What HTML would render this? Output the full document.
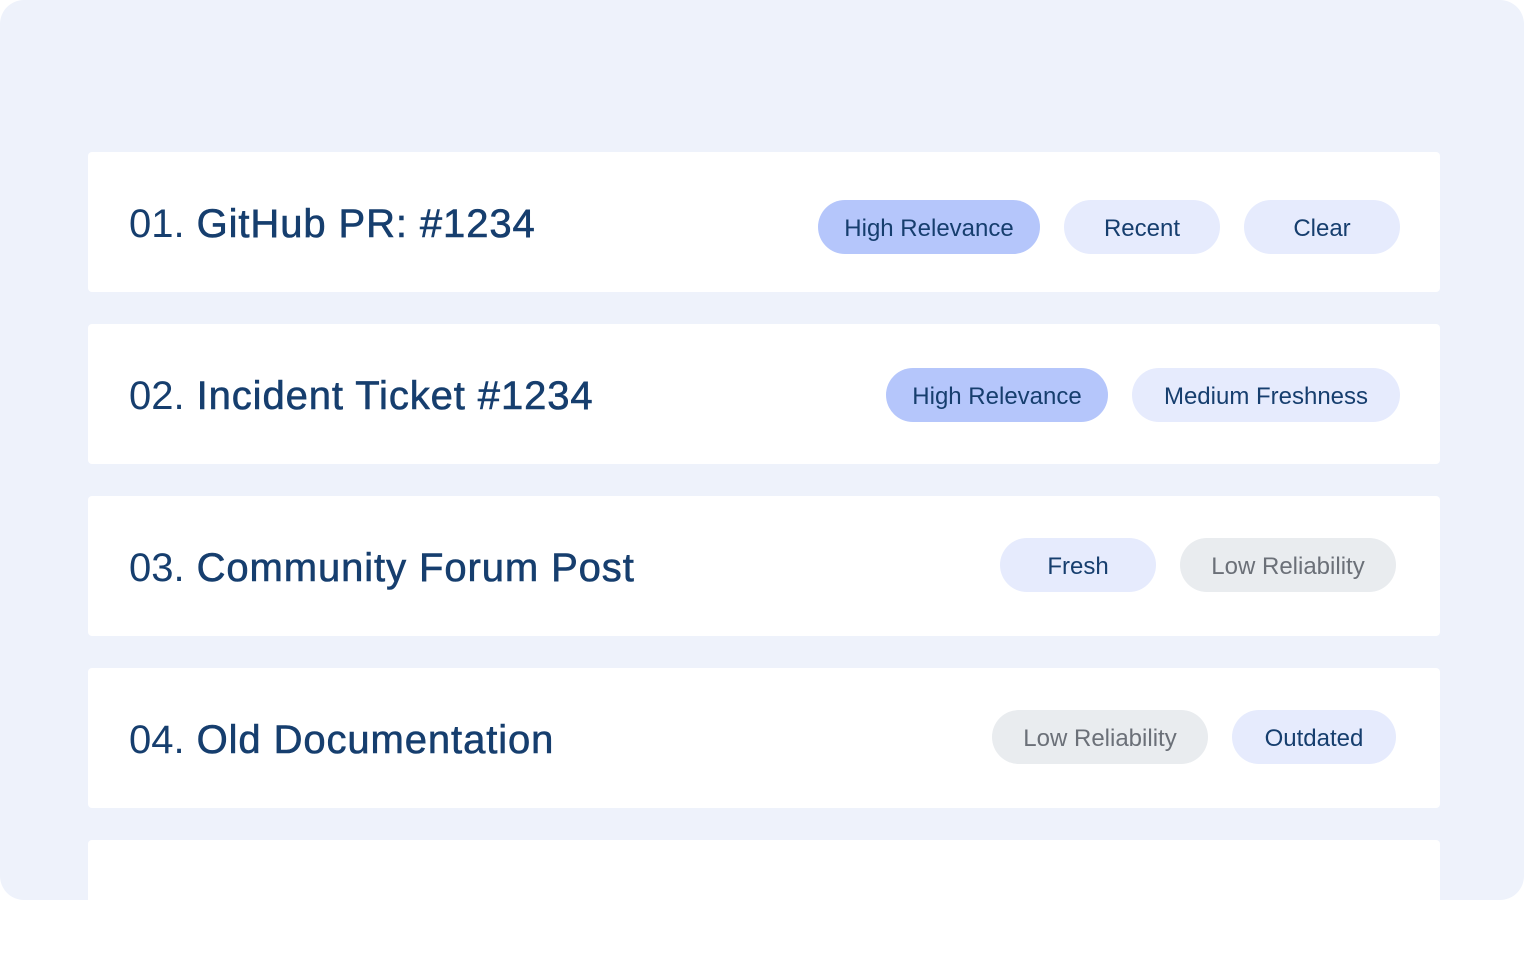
<!DOCTYPE html>
<html><head><style>
html,body{margin:0;width:1524px;height:874px;background:#fff;overflow:hidden;font-family:"Liberation Sans",sans-serif;}
.wrap{position:absolute;left:0;top:0;width:1524px;height:900px;background:#eef2fb;border-radius:24px;}
.card{position:absolute;left:88px;width:1352px;height:140px;background:#fff;border-radius:4px;}
.t{position:absolute;left:41px;font-size:40px;color:#163e6e;white-space:nowrap;line-height:46px;}
.t b{font-weight:normal;margin-left:12px;letter-spacing:0.9px;-webkit-text-stroke:0.6px #163e6e;}
.p{position:absolute;height:54px;border-radius:27px;font-size:24px;line-height:57px;text-align:center;color:#163e6e;}
.s{background:#b5c6fb}.l{background:#e6ebfd}.g{background:#e9ecef;color:#6b7078}
</style></head><body><div class="wrap">
<div class="card" style="top:152px"><div class="t" style="top:49px">01.<b>GitHub PR: #1234</b></div>
<div class="p s" style="top:48px;left:730px;width:222px">High Relevance</div>
<div class="p l" style="top:48px;left:976px;width:156px">Recent</div>
<div class="p l" style="top:48px;left:1156px;width:156px">Clear</div></div>
<div class="card" style="top:324px"><div class="t" style="top:49px">02.<b>Incident Ticket #1234</b></div>
<div class="p s" style="top:44px;left:798px;width:222px">High Relevance</div>
<div class="p l" style="top:44px;left:1044px;width:268px">Medium Freshness</div></div>
<div class="card" style="top:496px"><div class="t" style="top:49px">03.<b>Community Forum Post</b></div>
<div class="p l" style="top:42px;left:912px;width:156px">Fresh</div>
<div class="p g" style="top:42px;left:1092px;width:216px">Low Reliability</div></div>
<div class="card" style="top:668px"><div class="t" style="top:49px">04.<b>Old Documentation</b></div>
<div class="p g" style="top:42px;left:904px;width:216px">Low Reliability</div>
<div class="p l" style="top:42px;left:1144px;width:164px">Outdated</div></div>
<div class="card" style="top:840px"></div>
</div></body></html>
